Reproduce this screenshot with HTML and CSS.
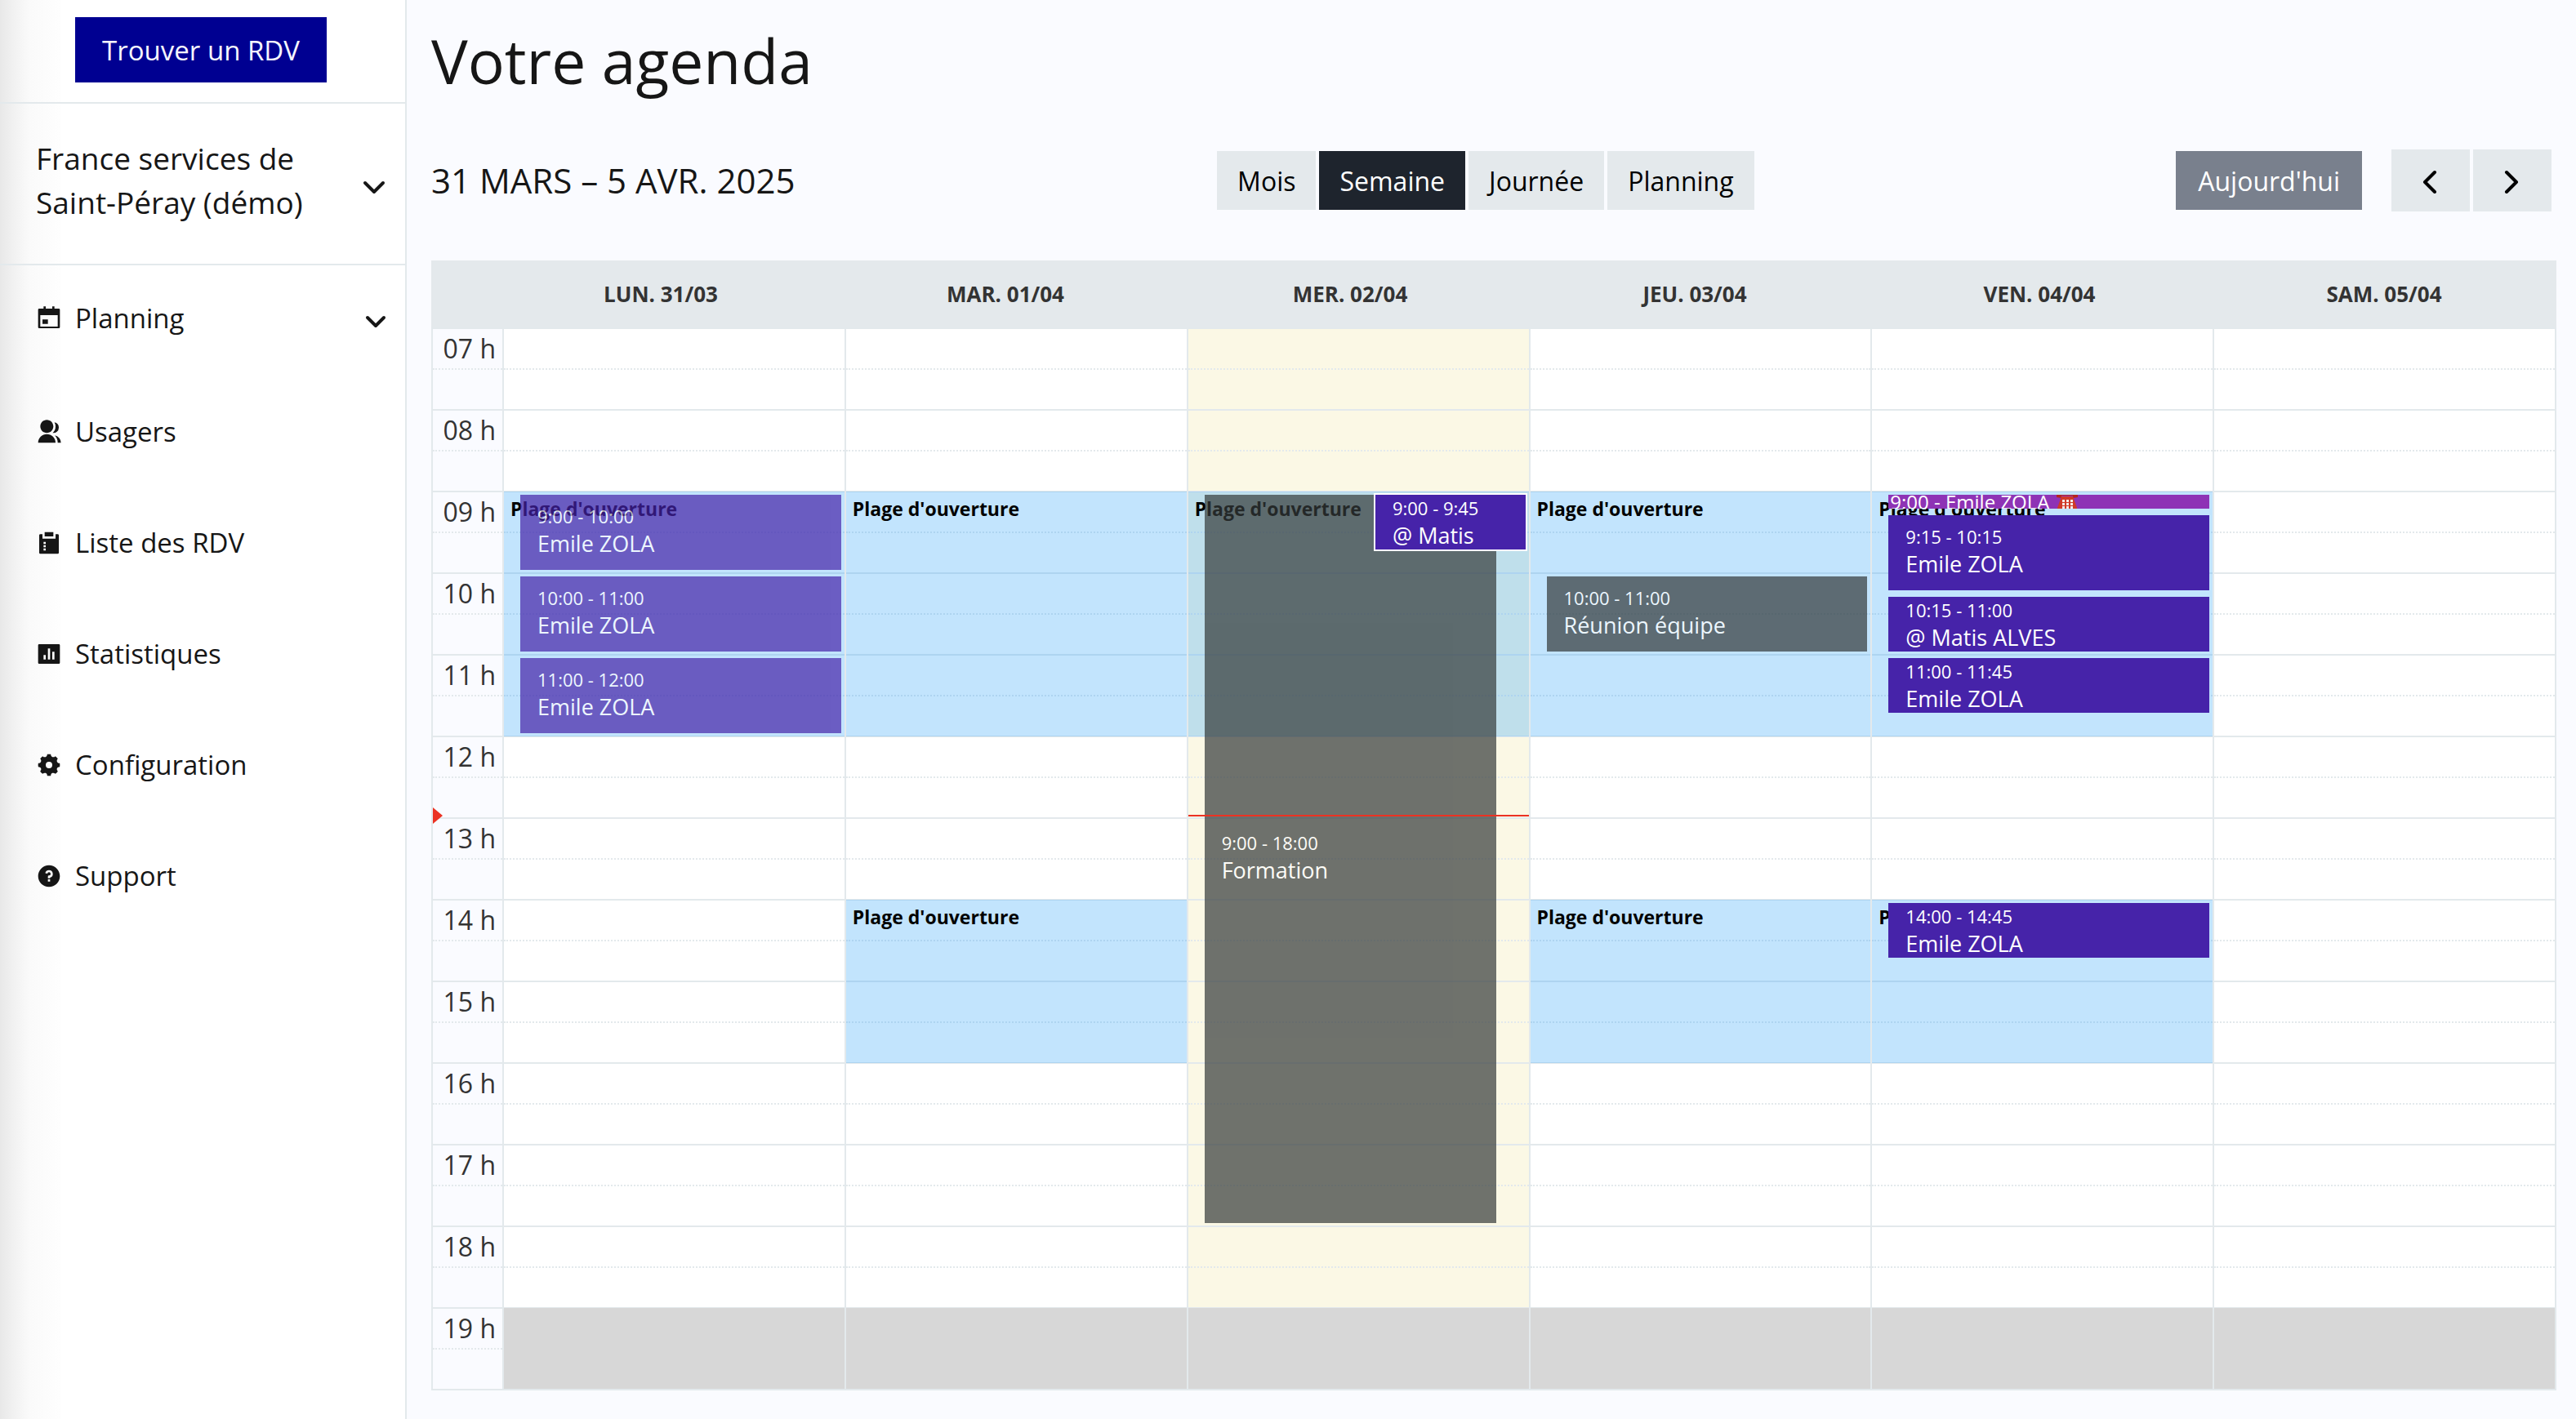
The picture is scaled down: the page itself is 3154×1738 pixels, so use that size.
FILE: index.html
```html
<!DOCTYPE html>
<html lang="fr">
<head>
<meta charset="utf-8">
<title>Votre agenda</title>
<link rel="stylesheet" href="styles.css">
</head>
<body>
<aside class="sidebar">
  <div class="sidebar-top"><button class="find" type="button">Trouver un RDV</button></div>
  <button class="org" type="button">
    <span>France services de<br>Saint-Péray (démo)</span>
    <svg class="org-chevron" viewBox="0 0 36 36" aria-hidden="true"><path d="M7 21l11 11 11-11"/></svg>
  </button>
  <nav class="nav">
    <button class="nav-item nav-toggle" type="button">
      <svg class="icon" viewBox="0 0 24 24" aria-hidden="true"><path d="M17 3h4a1 1 0 0 1 1 1v16a1 1 0 0 1-1 1H3a1 1 0 0 1-1-1V4a1 1 0 0 1 1-1h4V1h2v2h6V1h2v2zM4 9v10.500h16V9H4zm2 4h5v4H6v-4z"/></svg>
      <span>Planning</span>
      <svg class="nav-chevron" viewBox="0 0 32 32" aria-hidden="true"><path d="M6 15l10 10 10-10"/></svg>
    </button>
    <a class="nav-item" href="#usagers">
      <svg class="icon" viewBox="0 0 24 24" aria-hidden="true"><path d="M2 22a8 8 0 1 1 16 0H2zm8-9c-3.315 0-6-2.685-6-6s2.685-6 6-6 6 2.685 6 6-2.685 6-6 6zm7.363 2.233A7.505 7.505 0 0 1 22.983 22H20c0-2.610-1-4.986-2.637-6.767zm-2.023-2.276A7.980 7.980 0 0 0 18 7a7.964 7.964 0 0 0-1.015-3.903A5 5 0 0 1 21 8a4.999 4.999 0 0 1-5.660 4.957z"/></svg>
      <span>Usagers</span>
    </a>
    <a class="nav-item" href="#rdv">
      <svg class="icon" viewBox="0 0 24 24" aria-hidden="true"><path d="M6 4v4h12V4h2.007c.548 0 .993.445.993.993v16.014a.994.994 0 0 1-.993.993H3.993A.994.994 0 0 1 3 21.007V4.993C3 4.445 3.445 4 3.993 4H6zm3 13H7v2h2v-2zm0-3H7v2h2v-2zm0-3H7v2h2v-2zm7-9v4H8V2h8z"/></svg>
      <span>Liste des RDV</span>
    </a>
    <a class="nav-item" href="#stats">
      <svg class="icon" viewBox="0 0 24 24" aria-hidden="true"><path d="M3 3h18a1 1 0 0 1 1 1v16a1 1 0 0 1-1 1H3a1 1 0 0 1-1-1V4a1 1 0 0 1 1-1zm4 10v4h2v-4H7zm4-6v10h2V7h-2zm4 3v7h2v-7h-2z"/></svg>
      <span>Statistiques</span>
    </a>
    <a class="nav-item" href="#configuration">
      <svg class="icon" viewBox="0 0 24 24" aria-hidden="true"><path d="M2.132 13.630a9.942 9.942 0 0 1 0-3.260c1.102.026 2.092-.502 2.477-1.431.385-.930.058-2.004-.740-2.763a9.942 9.942 0 0 1 2.306-2.307c.760.798 1.834 1.125 2.764.740.930-.385 1.457-1.376 1.430-2.477a9.942 9.942 0 0 1 3.262 0c-.027 1.102.501 2.092 1.430 2.477.930.385 2.004.058 2.763-.740a9.942 9.942 0 0 1 2.307 2.306c-.798.760-1.125 1.834-.740 2.764.385.930 1.376 1.457 2.477 1.430a9.942 9.942 0 0 1 0 3.262c-1.102-.027-2.092.501-2.477 1.430-.385.930-.058 2.004.740 2.763a9.942 9.942 0 0 1-2.306 2.307c-.760-.798-1.834-1.125-2.764-.740-.930.385-1.457 1.376-1.430 2.477a9.942 9.942 0 0 1-3.262 0c.027-1.102-.501-2.092-1.430-2.477-.930-.385-2.004-.058-2.763.740a9.942 9.942 0 0 1-2.307-2.306c.798-.760 1.125-1.834.740-2.764-.385-.930-1.376-1.457-2.477-1.430zM12 15a3 3 0 1 0 0-6 3 3 0 0 0 0 6z"/></svg>
      <span>Configuration</span>
    </a>
    <a class="nav-item" href="#support">
      <svg class="icon" viewBox="0 0 24 24" aria-hidden="true"><path d="M12 22C6.477 22 2 17.523 2 12S6.477 2 12 2s10 4.477 10 10-4.477 10-10 10zm-1-7v2h2v-2h-2zm2-1.645A3.502 3.502 0 0 0 12 6.500a3.501 3.501 0 0 0-3.433 2.813l1.962.393A1.500 1.500 0 1 1 12 11.500a1 1 0 0 0-1 1V14h2v-.645z"/></svg>
      <span>Support</span>
    </a>
  </nav>
</aside>

<main class="main">
  <h1 class="title">Votre agenda</h1>
  <div class="toolbar">
    <h2 class="range">31 MARS – 5 AVR. 2025</h2>
    <div class="views">
      <button class="btn" type="button">Mois</button>
      <button class="btn btn-active" type="button" aria-pressed="true">Semaine</button>
      <button class="btn" type="button">Journée</button>
      <button class="btn" type="button">Planning</button>
    </div>
    <div class="moves">
      <button class="btn btn-today" type="button">Aujourd'hui</button>
      <div class="arrows">
        <button class="btn btn-arrow" type="button" aria-label="Semaine précédente"><svg viewBox="0 0 32 32" aria-hidden="true"><path d="M21 6L9 18l12 12"/></svg></button>
        <button class="btn btn-arrow" type="button" aria-label="Semaine suivante"><svg viewBox="0 0 32 32" aria-hidden="true"><path d="M9 6l12 12L9 30"/></svg></button>
      </div>
    </div>
  </div>

  <table class="week">
    <thead>
      <tr><th class="axis"></th><th>LUN. 31/03</th><th>MAR. 01/04</th><th>MER. 02/04</th><th>JEU. 03/04</th><th>VEN. 04/04</th><th>SAM. 05/04</th></tr>
    </thead>
    <tbody>
      <tr><th class="axis" scope="row">07 h</th><td></td><td></td><td class="today"></td><td></td><td></td><td></td></tr>
      <tr><th class="axis" scope="row">08 h</th><td></td><td></td><td class="today"></td><td></td><td></td><td></td></tr>
      <tr>
        <th class="axis" scope="row">09 h</th>
        <td>
          <div class="slot" style="--length:180">Plage d'ouverture</div>
          <a class="event past" href="#e1" style="--at:0;--length:60"><span class="time">9:00 - 10:00</span><span class="name">Emile ZOLA</span></a>
        </td>
        <td><div class="slot" style="--length:180">Plage d'ouverture</div></td>
        <td class="today">
          <div class="slot" style="--length:180">Plage d'ouverture</div>
          <a class="event absence shared" href="#e2" style="--at:0;--length:540"><span class="time">9:00 - 18:00</span><span class="name">Formation</span></a>
          <a class="event stacked" href="#e3" style="--at:0;--length:45"><span class="time">9:00 - 9:45</span><span class="name">@ Matis</span></a>
        </td>
        <td><div class="slot" style="--length:180">Plage d'ouverture</div></td>
        <td>
          <div class="slot" style="--length:180">Plage d'ouverture</div>
          <a class="event phone" href="#e4" style="--at:0;--length:15">
            <span>9:00 - Emile ZOLA</span>
            <svg class="phone-icon" viewBox="0 0 28 28" aria-label="Téléphone" role="img"><path fill="#b5251c" d="M1 8V5c1-5 25-5 26 0v3l-6 1V6H7v3z"/><path fill="#d03a28" d="M7 7h14l5 14v5H2v-5z"/><path fill="#8f1d16" d="M2 24h24v3H2z"/><path fill="#f4e9e6" d="M8 11h3v3H8zm5 0h3v3h-3zm5 0h3v3h-3zM8 15h3v3H8zm5 0h3v3h-3zm5 0h3v3h-3zM8 19h3v3H8zm5 0h3v3h-3zm5 0h3v3h-3z"/></svg>
          </a>
          <a class="event" href="#e5" style="--at:15;--length:60"><span class="time">9:15 - 10:15</span><span class="name">Emile ZOLA</span></a>
        </td>
        <td></td>
      </tr>
      <tr>
        <th class="axis" scope="row">10 h</th>
        <td><a class="event past" href="#e6" style="--at:0;--length:60"><span class="time">10:00 - 11:00</span><span class="name">Emile ZOLA</span></a></td>
        <td></td>
        <td class="today"></td>
        <td><a class="event absence" href="#e7" style="--at:0;--length:60"><span class="time">10:00 - 11:00</span><span class="name">Réunion équipe</span></a></td>
        <td><a class="event" href="#e8" style="--at:15;--length:45"><span class="time">10:15 - 11:00</span><span class="name">@ Matis ALVES</span></a></td>
        <td></td>
      </tr>
      <tr>
        <th class="axis" scope="row">11 h</th>
        <td><a class="event past" href="#e9" style="--at:0;--length:60"><span class="time">11:00 - 12:00</span><span class="name">Emile ZOLA</span></a></td>
        <td></td>
        <td class="today"></td>
        <td></td>
        <td><a class="event" href="#e10" style="--at:0;--length:45"><span class="time">11:00 - 11:45</span><span class="name">Emile ZOLA</span></a></td>
        <td></td>
      </tr>
      <tr>
        <th class="axis" scope="row">12 h<span class="now-arrow" style="--at:58"></span></th>
        <td></td><td></td>
        <td class="today"><div class="now-line" style="--at:58"></div></td>
        <td></td><td></td><td></td>
      </tr>
      <tr><th class="axis" scope="row">13 h</th><td></td><td></td><td class="today"></td><td></td><td></td><td></td></tr>
      <tr>
        <th class="axis" scope="row">14 h</th>
        <td></td>
        <td><div class="slot" style="--length:120">Plage d'ouverture</div></td>
        <td class="today"></td>
        <td><div class="slot" style="--length:120">Plage d'ouverture</div></td>
        <td>
          <div class="slot" style="--length:120">Plage d'ouverture</div>
          <a class="event" href="#e11" style="--at:0;--length:45"><span class="time">14:00 - 14:45</span><span class="name">Emile ZOLA</span></a>
        </td>
        <td></td>
      </tr>
      <tr><th class="axis" scope="row">15 h</th><td></td><td></td><td class="today"></td><td></td><td></td><td></td></tr>
      <tr><th class="axis" scope="row">16 h</th><td></td><td></td><td class="today"></td><td></td><td></td><td></td></tr>
      <tr><th class="axis" scope="row">17 h</th><td></td><td></td><td class="today"></td><td></td><td></td><td></td></tr>
      <tr><th class="axis" scope="row">18 h</th><td></td><td></td><td class="today"></td><td></td><td></td><td></td></tr>
      <tr class="closed"><th class="axis" scope="row">19 h</th><td></td><td></td><td></td><td></td><td></td><td></td></tr>
    </tbody>
  </table>
</main>
</body>
</html>
```
FILE: styles.css
```css
:root {
  --line: #e3e9ec;
  --fill: #e4e9ec;
  --ink: #161616;
}

* { box-sizing: border-box; }

body {
  margin: 0;
  display: flex;
  min-height: 100vh;
  background: #fafbff;
  color: var(--ink);
  font-family: "Open Sans", "Noto Sans", sans-serif;
  font-size: 32px;
}

button {
  border: 0;
  margin: 0;
  padding: 0;
  background: none;
  color: inherit;
  font: inherit;
  text-align: left;
}

a { color: inherit; text-decoration: none; }

/* Sidebar */
.sidebar {
  flex: none;
  width: 498px;
  border-right: 2px solid var(--line);
  background: linear-gradient(to right, #e8e8e8, #f2f2f2 18px, #fafafa 36px, #fefefe 74px, #fff 76px);
  font-size: 33px;
  font-weight: 500;
}

.sidebar-top {
  padding: 21px 96px 24px 92px;
  border-bottom: 2px solid var(--line);
}

.find {
  display: block;
  width: 100%;
  height: 80px;
  background: #000091;
  color: #f5f5fe;
  text-align: center;
}

.org {
  display: flex;
  align-items: center;
  justify-content: space-between;
  width: 100%;
  padding: 40px 20px 48px 44px;
  border-bottom: 2px solid var(--line);
  font-size: 37px;
  line-height: 54px;
}

.org-chevron,
.nav-chevron {
  fill: none;
  stroke: var(--ink);
  stroke-width: 4;
  stroke-linecap: round;
  stroke-linejoin: round;
}

.org-chevron { width: 36px; height: 36px; }
.nav-chevron { width: 32px; height: 32px; margin-left: auto; }

.nav {
  display: flex;
  flex-direction: column;
  gap: 88px;
  padding: 38px 20px 0 44px;
}

.nav-item {
  display: flex;
  align-items: center;
  gap: 16px;
  line-height: 48px;
}

.nav-toggle { line-height: 54px; }

.icon { width: 32px; height: 32px; fill: var(--ink); }

/* Header */
.main {
  flex: 1;
  min-width: 0;
  padding: 20px 24px 32px 30px;
}

.title {
  margin: 0 0 55px;
  font-size: 75px;
  font-weight: 400;
  line-height: 108px;
}

.toolbar {
  display: flex;
  align-items: center;
  justify-content: space-between;
  margin-bottom: 60px;
  padding-right: 6px;
}

.range {
  margin: 0;
  font-size: 42px;
  font-weight: 400;
  line-height: 60px;
}

.views, .arrows { display: flex; gap: 4px; }
.moves { display: flex; align-items: center; gap: 36px; }

.btn {
  height: 72px;
  padding: 0 25px;
  background: var(--fill);
  color: #000;
}

.btn-active { background: #1e242d; color: #fff; }
.btn-today { padding: 0 27px; background: #79808d; color: #fff; }

.btn-arrow {
  display: flex;
  align-items: center;
  justify-content: center;
  width: 96px;
  height: 76px;
}

.btn-arrow svg {
  flex: none;
  width: 32px;
  height: 32px;
  fill: none;
  stroke: #000;
  stroke-width: 4;
  stroke-linecap: round;
  stroke-linejoin: round;
}

/* Week grid: one hour is 100px high */
.week, .week thead, .week tbody { display: block; }
.week { color: #333; }
.week th, .week td { display: block; padding: 0; }

.week tr { display: grid; }
thead tr { grid-template-columns: 70px repeat(6, minmax(0, 1fr)); }
tbody tr { grid-template-columns: 87px repeat(6, minmax(0, 1fr)); height: 100px; }

thead {
  background: var(--fill);
  font-size: 26px;
  font-weight: 700;
  line-height: 82px;
  text-align: center;
}

tbody {
  border-right: 2px solid var(--line);
  border-bottom: 2px solid var(--line);
}

tbody td, tbody th {
  position: relative;
  border-top: 2px solid var(--line);
  border-left: 2px solid var(--line);
}

tbody td { background: #fff; }

tbody td::before, tbody th::before {
  content: "";
  position: absolute;
  top: 48px;
  left: 0;
  right: 0;
  border-top: 2px dotted var(--line);
}

thead .axis { height: 82px; }

.week tbody .axis {
  padding-right: 8px;
  font-weight: 400;
  line-height: 48px;
  text-align: right;
}

tbody .today { background: #fbf8e5; }

.closed td::before {
  top: -1px;
  bottom: 0;
  border: 0;
  background: #d7d7d7;
}

.slot {
  position: absolute;
  z-index: 1;
  top: -1px;
  left: 0;
  right: 0;
  height: calc(var(--length) * 100px / 60);
  padding: 4px 8px;
  background: rgba(52, 165, 248, 0.3);
  color: #000;
  font-size: 23px;
  font-weight: 700;
  line-height: 34px;
}

.event {
  position: absolute;
  z-index: 2;
  top: calc(var(--at) * 100px / 60 + 3px);
  left: 20px;
  right: 4px;
  height: calc(var(--length) * 100px / 60 - 8px);
  display: flex;
  flex-direction: column;
  justify-content: safe center;
  padding: 0 21px 6px;
  overflow: hidden;
  background: #4623a9;
  color: #fff;
  white-space: nowrap;
}

.time { font-size: 22px; line-height: 33px; }
.name { font-size: 27px; line-height: 34px; }
.past { opacity: 0.7; }
.absence { background: #333939; opacity: 0.7; }
.shared { right: 40px; }
.stacked { left: 55%; outline: 2px solid #fff; }

.phone {
  flex-direction: row;
  align-items: center;
  justify-content: flex-start;
  gap: 8px;
  padding: 0 2px;
  background: #8e33b5;
  font-size: 24px;
  line-height: 32px;
}

.phone-icon { flex: none; width: 28px; height: 28px; }

.now-line {
  position: absolute;
  z-index: 3;
  top: calc(var(--at) * 100px / 60 - 2px);
  left: 0;
  right: 0;
  height: 2px;
  background: #eb3223;
}

.now-arrow {
  position: absolute;
  z-index: 3;
  top: calc(var(--at) * 100px / 60 - 11px);
  left: 0;
  border: solid transparent;
  border-width: 10px 0 10px 12px;
  border-left-color: #eb3223;
}
```
